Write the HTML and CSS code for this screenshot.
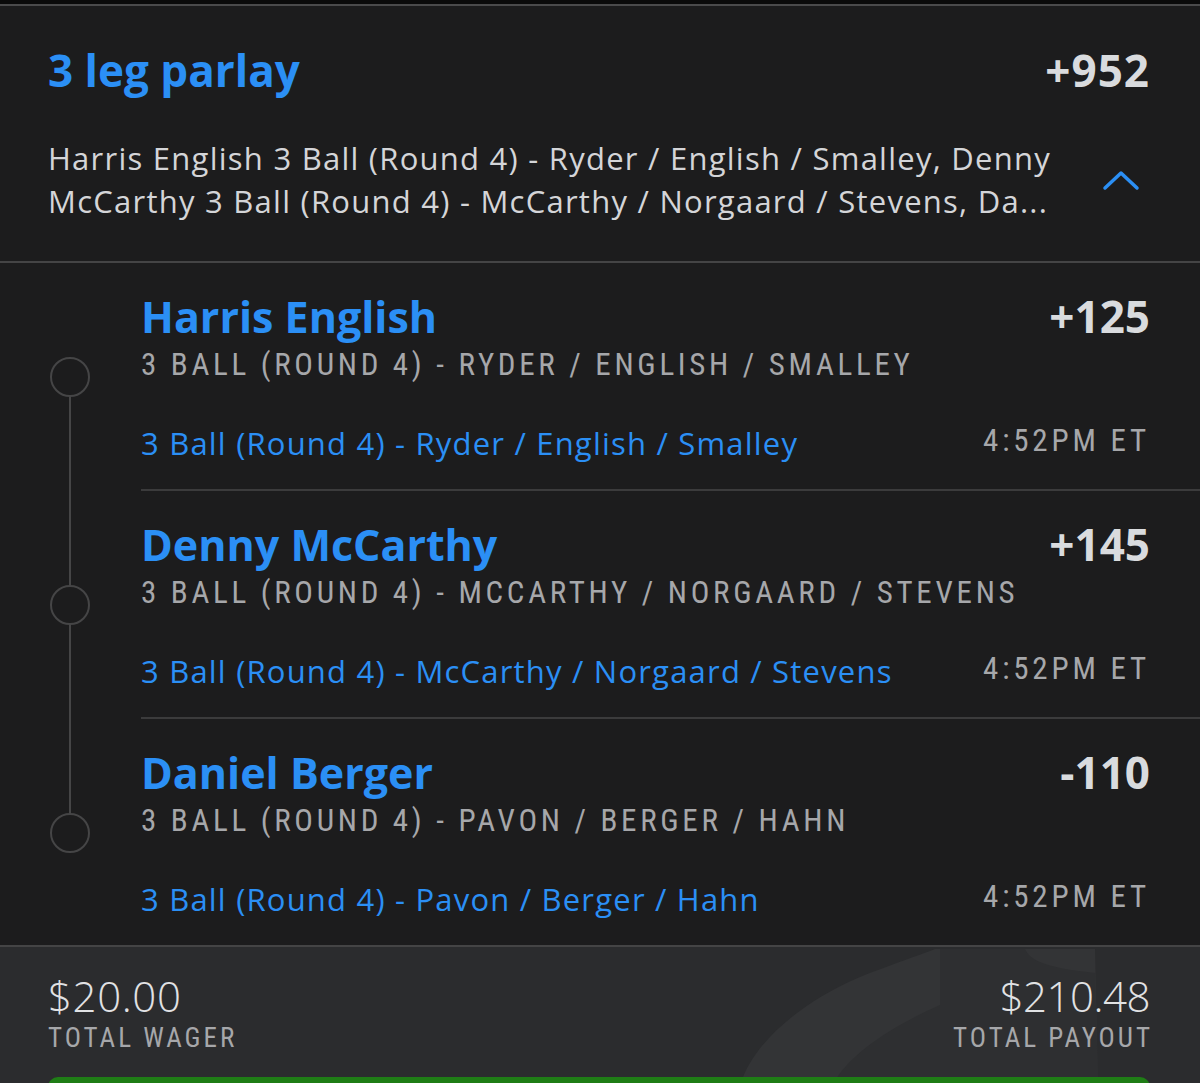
FILE: index.html
```html
<!DOCTYPE html>
<html lang="en">
<head>
<meta charset="utf-8">
<title>3 leg parlay</title>
<link rel="stylesheet" href="styles.css">
</head>
<body>
<div class="topbar"></div>
<section class="summary">
  <div class="summary-head">
    <h1 class="title">3 leg parlay</h1>
    <span class="odds">+952</span>
  </div>
  <div class="summary-desc">
    <p class="desc"><span class="desc-line">Harris English 3 Ball (Round 4) - Ryder / English / Smalley, Denny</span><span class="desc-line">McCarthy 3 Ball (Round 4) - McCarthy / Norgaard / Stevens, Da...</span></p>
    <svg class="chevron" width="38" height="22" viewBox="0 0 38 22"><polyline points="3,19 19,4 35,19" fill="none" stroke="#2b8ff5" stroke-width="3.5" stroke-linecap="round" stroke-linejoin="round"/></svg>
  </div>
</section>
<section class="legs">
  <div class="leg first">
    <div class="rail"><span class="dot"></span></div>
    <div class="leg-body">
      <div class="leg-head"><span class="leg-name">Harris English</span><span class="leg-odds">+125</span></div>
      <div class="leg-market">3 BALL (ROUND 4) - RYDER / ENGLISH / SMALLEY</div>
      <div class="leg-foot"><span class="leg-event">3 Ball (Round 4) - Ryder / English / Smalley</span><span class="leg-time">4:52PM ET</span></div>
    </div>
  </div>
  <div class="leg">
    <div class="rail"><span class="dot"></span></div>
    <div class="leg-body">
      <div class="leg-head"><span class="leg-name">Denny McCarthy</span><span class="leg-odds">+145</span></div>
      <div class="leg-market">3 BALL (ROUND 4) - MCCARTHY / NORGAARD / STEVENS</div>
      <div class="leg-foot"><span class="leg-event">3 Ball (Round 4) - McCarthy / Norgaard / Stevens</span><span class="leg-time">4:52PM ET</span></div>
    </div>
  </div>
  <div class="leg last">
    <div class="rail"><span class="dot"></span></div>
    <div class="leg-body">
      <div class="leg-head"><span class="leg-name">Daniel Berger</span><span class="leg-odds">-110</span></div>
      <div class="leg-market">3 BALL (ROUND 4) - PAVON / BERGER / HAHN</div>
      <div class="leg-foot"><span class="leg-event">3 Ball (Round 4) - Pavon / Berger / Hahn</span><span class="leg-time">4:52PM ET</span></div>
    </div>
  </div>
</section>
<footer class="totals">
  <svg class="watermark" width="420" height="140" viewBox="0 0 420 140">
    <path d="M0 140 C8 105 50 60 120 30 C150 18 180 8 195 2 L355 2 C356 40 357 90 358 140 Z" fill="#333436"/>
    <path d="M92 140 C105 110 150 80 200 58 L200 2 L285 2 C290 12 300 20 355 26 L358 140 Z" fill="#2e2f31"/>
  </svg>
  <div class="total">
    <span class="amount">$20.00</span>
    <span class="label">TOTAL WAGER</span>
  </div>
  <div class="total right">
    <span class="amount">$210.48</span>
    <span class="label">TOTAL PAYOUT</span>
  </div>
  <div class="cta"></div>
</footer>
</body>
</html>
```
FILE: styles.css
```css
* { box-sizing: border-box; }
html, body {
  margin: 0;
  padding: 0;
  height: 1083px;
  overflow: hidden;
  background: #1c1c1d;
  font-family: "Open Sans", "Noto Sans", sans-serif;
}
.topbar {
  height: 6px;
  background: #0a0a0a;
  border-bottom: 2px solid #4a4a4b;
}
.summary {
  padding: 34px 50px 38px 48px;
  border-bottom: 2px solid #444445;
}
.summary-head {
  display: flex;
  justify-content: space-between;
  align-items: baseline;
}
.title {
  margin: 0;
  font-size: 44px;
  line-height: 56px;
  font-weight: 700;
  color: #2b8ff5;
}
.odds, .leg-odds {
  font-size: 44px;
  font-weight: 700;
  color: #d9dbde;
}
.odds { letter-spacing: 1px; }
.summary-desc {
  margin-top: 37px;
  display: flex;
  align-items: center;
  justify-content: space-between;
}
.desc {
  margin: 0;
  font-size: 31px;
  line-height: 43px;
  letter-spacing: 1.25px;
  color: #d4d5d8;
}
.desc-line {
  display: block;
  white-space: nowrap;
}
.chevron { margin-right: 10px; }
.legs { display: flex; flex-direction: column; }
.leg {
  display: flex;
  height: 228px;
}
.leg.last { height: 226px; }
.rail {
  width: 141px;
  flex: none;
  position: relative;
}
.rail::before {
  content: "";
  position: absolute;
  left: 69px;
  width: 2px;
  top: 0;
  bottom: 0;
  background: #454546;
}
.leg.first .rail::before { top: 114px; }
.leg.last .rail::before { bottom: 112px; }
.dot {
  position: absolute;
  left: 50px;
  top: 94px;
  width: 40px;
  height: 40px;
  border: 2px solid #454546;
  border-radius: 50%;
  background: #1c1c1d;
}
.leg-body {
  flex: 1;
  padding: 28px 50px 0 0;
  border-bottom: 2px solid #3b3b3c;
  display: flex;
  flex-direction: column;
}
.leg.last .leg-body { border-bottom: 0; }
.leg-head {
  display: flex;
  justify-content: space-between;
  align-items: baseline;
  line-height: 50px;
}
.leg-name {
  font-size: 43px;
  font-weight: 700;
  color: #2b8ff5;
}
.leg-market, .leg-time, .label {
  font-family: "Roboto Condensed", "Liberation Sans Narrow", "DejaVu Sans Condensed", Roboto, sans-serif;
  font-stretch: condensed;
  color: #a6a7aa;
}
.leg-market {
  margin-top: 6px;
  font-size: 31px;
  line-height: 34px;
  letter-spacing: 3.7px;
}
.leg-foot {
  margin-top: 41px;
  display: flex;
  justify-content: space-between;
  align-items: baseline;
  line-height: 40px;
}
.leg-event {
  font-size: 31px;
  letter-spacing: 1.2px;
  color: #2b8ff5;
}
.leg-time {
  font-size: 31px;
  letter-spacing: 3.8px;
  margin-right: 0;
  position: relative;
  top: -4px;
}
.totals {
  position: relative;
  overflow: hidden;
  border-top: 2px solid #444445;
  background: #2b2c2e;
  height: 140px;
  padding: 24px 50px 0 48px;
  display: flex;
  flex-wrap: wrap;
  justify-content: space-between;
}
.watermark {
  position: absolute;
  left: 740px;
  top: 0;
}
.total {
  position: relative;
  display: flex;
  flex-direction: column;
}
.total.right { align-items: flex-end; }
.amount {
  font-size: 42px;
  line-height: 50px;
  font-weight: 300;
  color: #e1e2e4;
}
.total:not(.right) .amount { letter-spacing: 0.6px; }
.total.right .amount { letter-spacing: -0.5px; }
.label {
  font-size: 27px;
  line-height: 34px;
  letter-spacing: 3px;
}
.total.right .label { margin-right: -3px; }
.cta {
  position: relative;
  width: 100%;
  height: 40px;
  margin-top: 22px;
  border-radius: 10px;
  background: #1f7d16;
}
```
